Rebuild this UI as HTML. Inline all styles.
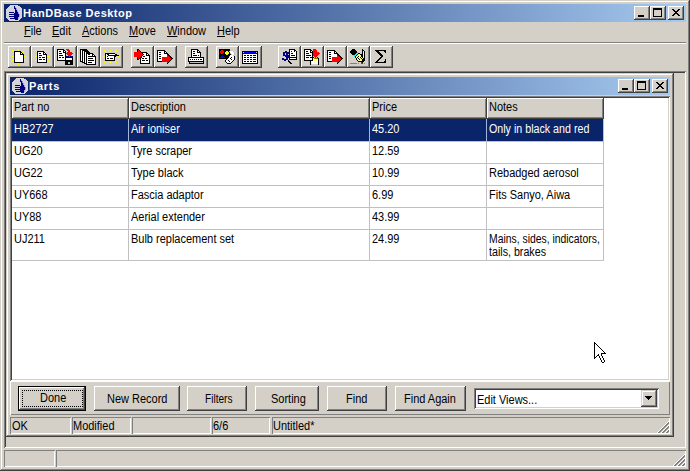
<!DOCTYPE html>
<html><head><meta charset="utf-8">
<style>
*{box-sizing:border-box}
html,body{margin:0;padding:0}
body{width:690px;height:471px;overflow:hidden;background:#D4D0C8;position:relative;font:11px "Liberation Sans",sans-serif;color:#000}
.a{position:absolute}
svg{display:block}
.t{position:absolute;white-space:nowrap;line-height:13px;font-size:12px;margin:0 0 0 -1px;transform:scaleX(0.915);transform-origin:0 0}
.raised{box-shadow:inset -1px -1px #404040,inset 1px 1px #D4D0C8,inset -2px -2px #808080,inset 2px 2px #fff}
.sunk{box-shadow:inset 1px 1px #808080,inset -1px -1px #fff,inset 2px 2px #404040,inset -2px -2px #D4D0C8}
.thin{box-shadow:inset 1px 1px #808080,inset -1px -1px #fff}
.btn{position:absolute;background:#D4D0C8;box-shadow:inset -1px -1px #404040,inset 1px 1px #fff,inset -2px -2px #808080}
.tb{position:absolute;top:46px;width:23px;height:22px;background:#D4D0C8;box-shadow:inset -1px -1px #404040,inset 1px 1px #fff,inset -2px -2px #808080}
.tb svg{position:absolute;left:3px;top:3px}
.cap{position:absolute;width:16px;height:14px;background:#D4D0C8;box-shadow:inset -1px -1px #404040,inset 1px 1px #fff,inset -2px -2px #808080}
.cap svg{position:absolute;left:0;top:0}
.bt{font-size:11px;font-weight:bold;color:#fff;transform:none;margin:-1px 0 0 -1px;letter-spacing:0.5px}
.u{text-decoration:underline;text-underline-offset:1px}
.hd{position:absolute;top:98px;height:21px;background:#D4D0C8;box-shadow:inset -1px -1px #404040,inset 1px 1px #fff,inset -2px -2px #808080}
.gv{position:absolute;width:1px;background:#C0C0C0}
.gh{position:absolute;height:1px;left:12px;width:592px;background:#C0C0C0}
.sel{color:#fff}
</style></head><body>
<!-- main frame -->
<div class="a raised" style="left:0;top:0;width:690px;height:471px"></div>
<!-- title bar -->
<div class="a" style="left:4px;top:4px;width:682px;height:18px;background:linear-gradient(to right,#0A246A,#A6CAF0)"></div>
<div class="a" style="left:6px;top:5px"><svg width="16" height="16" viewBox="0 0 16 16" shape-rendering="crispEdges"><rect x="4" y="0" width="8" height="1" fill="#D4D4DC"/><rect x="3" y="1" width="5" height="1" fill="#D4D4DC"/><rect x="8" y="1" width="1" height="1" fill="#000080"/><rect x="9" y="1" width="5" height="1" fill="#D4D4DC"/><rect x="2" y="2" width="6" height="1" fill="#D4D4DC"/><rect x="8" y="2" width="1" height="1" fill="#000080"/><rect x="9" y="2" width="1" height="1" fill="#A0A0E0"/><rect x="10" y="2" width="5" height="1" fill="#D4D4DC"/><rect x="1" y="3" width="7" height="1" fill="#D4D4DC"/><rect x="8" y="3" width="2" height="1" fill="#000080"/><rect x="10" y="3" width="1" height="1" fill="#A0A0E0"/><rect x="11" y="3" width="5" height="1" fill="#D4D4DC"/><rect x="0" y="4" width="9" height="1" fill="#D4D4DC"/><rect x="9" y="4" width="1" height="1" fill="#000080"/><rect x="10" y="4" width="1" height="1" fill="#A0A0E0"/><rect x="11" y="4" width="5" height="1" fill="#D4D4DC"/><rect x="0" y="5" width="9" height="1" fill="#D4D4DC"/><rect x="9" y="5" width="2" height="1" fill="#000080"/><rect x="11" y="5" width="1" height="1" fill="#A0A0E0"/><rect x="12" y="5" width="4" height="1" fill="#D4D4DC"/><rect x="0" y="6" width="9" height="1" fill="#D4D4DC"/><rect x="9" y="6" width="2" height="1" fill="#000080"/><rect x="11" y="6" width="1" height="1" fill="#A0A0E0"/><rect x="12" y="6" width="4" height="1" fill="#D4D4DC"/><rect x="0" y="7" width="3" height="1" fill="#D4D4DC"/><rect x="3" y="7" width="5" height="1" fill="#000080"/><rect x="8" y="7" width="1" height="1" fill="#D4D4DC"/><rect x="9" y="7" width="3" height="1" fill="#000080"/><rect x="12" y="7" width="1" height="1" fill="#A0A0E0"/><rect x="13" y="7" width="3" height="1" fill="#D4D4DC"/><rect x="0" y="8" width="8" height="1" fill="#D4D4DC"/><rect x="8" y="8" width="4" height="1" fill="#000080"/><rect x="12" y="8" width="1" height="1" fill="#A0A0E0"/><rect x="13" y="8" width="3" height="1" fill="#D4D4DC"/><rect x="0" y="9" width="3" height="1" fill="#D4D4DC"/><rect x="3" y="9" width="10" height="1" fill="#000080"/><rect x="13" y="9" width="1" height="1" fill="#A0A0E0"/><rect x="14" y="9" width="2" height="1" fill="#D4D4DC"/><rect x="0" y="10" width="8" height="1" fill="#D4D4DC"/><rect x="8" y="10" width="5" height="1" fill="#000080"/><rect x="13" y="10" width="1" height="1" fill="#A0A0E0"/><rect x="14" y="10" width="2" height="1" fill="#D4D4DC"/><rect x="0" y="11" width="3" height="1" fill="#D4D4DC"/><rect x="3" y="11" width="10" height="1" fill="#000080"/><rect x="13" y="11" width="1" height="1" fill="#A0A0E0"/><rect x="14" y="11" width="2" height="1" fill="#D4D4DC"/><rect x="0" y="12" width="8" height="1" fill="#D4D4DC"/><rect x="8" y="12" width="4" height="1" fill="#000080"/><rect x="12" y="12" width="1" height="1" fill="#A0A0E0"/><rect x="13" y="12" width="3" height="1" fill="#D4D4DC"/><rect x="1" y="13" width="3" height="1" fill="#D4D4DC"/><rect x="4" y="13" width="8" height="1" fill="#000080"/><rect x="12" y="13" width="1" height="1" fill="#A0A0E0"/><rect x="13" y="13" width="2" height="1" fill="#D4D4DC"/><rect x="2" y="14" width="7" height="1" fill="#D4D4DC"/><rect x="9" y="14" width="3" height="1" fill="#000080"/><rect x="12" y="14" width="2" height="1" fill="#D4D4DC"/><rect x="3" y="15" width="10" height="1" fill="#D4D4DC"/></svg></div>
<div class="t bt" style="left:24px;top:8px">HanDBase Desktop</div>
<div class="cap" style="left:634px;top:6px"><svg width="16" height="14" shape-rendering="crispEdges"><rect x="4" y="9" width="6" height="2"/></svg></div>
<div class="cap" style="left:650px;top:6px"><svg width="16" height="14" shape-rendering="crispEdges"><rect x="3" y="2" width="9" height="2"/><rect x="3" y="4" width="1" height="7"/><rect x="11" y="4" width="1" height="7"/><rect x="3" y="10" width="9" height="1"/></svg></div>
<div class="cap" style="left:668px;top:6px"><svg width="16" height="14" shape-rendering="crispEdges"><path d="M4 3h2v1h1v1h2v-1h1v-1h2v1h-1v1h-1v1h-1v1h1v1h1v1h1v1h-2v-1h-1v-1h-2v1h-1v1h-2v-1h1v-1h1v-1h1v-1h-1v-1h-1v-1h-1z"/></svg></div>

<!-- menu -->
<div class="t" style="left:25px;top:25px"><span class="u">F</span>ile</div>
<div class="t" style="left:53px;top:25px"><span class="u">E</span>dit</div>
<div class="t" style="left:83px;top:25px"><span class="u">A</span>ctions</div>
<div class="t" style="left:130px;top:25px"><span class="u">M</span>ove</div>
<div class="t" style="left:168px;top:25px"><span class="u">W</span>indow</div>
<div class="t" style="left:218px;top:25px"><span class="u">H</span>elp</div>
<!-- separator -->
<div class="a" style="left:4px;top:42px;width:682px;height:1px;background:#808080"></div>
<div class="a" style="left:4px;top:43px;width:682px;height:1px;background:#fff"></div>

<!-- toolbar -->
<div class="tb" style="left:8px"><svg width="16" height="16" viewBox="0 0 16 16" shape-rendering="crispEdges"><rect x="7" y="0" width="1" height="1" fill="#ffff00"/><rect x="1" y="1" width="1" height="1" fill="#ffff00"/><rect x="7" y="1" width="1" height="1" fill="#ffff00"/><rect x="2" y="2" width="1" height="1" fill="#ffff00"/><rect x="3" y="2" width="7" height="1" fill="#000000"/><rect x="12" y="2" width="1" height="1" fill="#ffff00"/><rect x="3" y="3" width="1" height="1" fill="#000000"/><rect x="4" y="3" width="5" height="1" fill="#ffffff"/><rect x="9" y="3" width="2" height="1" fill="#000000"/><rect x="11" y="3" width="1" height="1" fill="#ffff00"/><rect x="3" y="4" width="1" height="1" fill="#000000"/><rect x="4" y="4" width="5" height="1" fill="#ffffff"/><rect x="9" y="4" width="1" height="1" fill="#000000"/><rect x="10" y="4" width="1" height="1" fill="#ffffff"/><rect x="11" y="4" width="1" height="1" fill="#000000"/><rect x="3" y="5" width="1" height="1" fill="#000000"/><rect x="4" y="5" width="5" height="1" fill="#ffffff"/><rect x="9" y="5" width="4" height="1" fill="#000000"/><rect x="3" y="6" width="1" height="1" fill="#000000"/><rect x="4" y="6" width="8" height="1" fill="#ffffff"/><rect x="12" y="6" width="1" height="1" fill="#000000"/><rect x="1" y="7" width="2" height="1" fill="#ffff00"/><rect x="3" y="7" width="1" height="1" fill="#000000"/><rect x="4" y="7" width="8" height="1" fill="#ffffff"/><rect x="12" y="7" width="1" height="1" fill="#000000"/><rect x="13" y="7" width="2" height="1" fill="#ffff00"/><rect x="3" y="8" width="1" height="1" fill="#000000"/><rect x="4" y="8" width="8" height="1" fill="#ffffff"/><rect x="12" y="8" width="1" height="1" fill="#000000"/><rect x="15" y="8" width="1" height="1" fill="#ffff00"/><rect x="3" y="9" width="1" height="1" fill="#000000"/><rect x="4" y="9" width="8" height="1" fill="#ffffff"/><rect x="12" y="9" width="1" height="1" fill="#000000"/><rect x="2" y="10" width="1" height="1" fill="#ffff00"/><rect x="3" y="10" width="1" height="1" fill="#000000"/><rect x="4" y="10" width="8" height="1" fill="#ffffff"/><rect x="12" y="10" width="1" height="1" fill="#000000"/><rect x="13" y="10" width="1" height="1" fill="#ffff00"/><rect x="1" y="11" width="1" height="1" fill="#ffff00"/><rect x="3" y="11" width="1" height="1" fill="#000000"/><rect x="4" y="11" width="8" height="1" fill="#ffffff"/><rect x="12" y="11" width="1" height="1" fill="#000000"/><rect x="14" y="11" width="1" height="1" fill="#ffff00"/><rect x="3" y="12" width="1" height="1" fill="#000000"/><rect x="4" y="12" width="8" height="1" fill="#ffffff"/><rect x="12" y="12" width="1" height="1" fill="#000000"/><rect x="3" y="13" width="10" height="1" fill="#000000"/><rect x="7" y="14" width="1" height="1" fill="#ffff00"/><rect x="7" y="15" width="1" height="1" fill="#ffff00"/></svg></div>
<div class="tb" style="left:31px"><svg width="16" height="16" viewBox="0 0 16 16" shape-rendering="crispEdges"><rect x="7" y="0" width="1" height="1" fill="#ffff00"/><rect x="1" y="1" width="1" height="1" fill="#ffff00"/><rect x="7" y="1" width="1" height="1" fill="#ffff00"/><rect x="2" y="2" width="1" height="1" fill="#ffff00"/><rect x="3" y="2" width="7" height="1" fill="#000000"/><rect x="12" y="2" width="1" height="1" fill="#ffff00"/><rect x="3" y="3" width="1" height="1" fill="#000000"/><rect x="4" y="3" width="5" height="1" fill="#ffffff"/><rect x="9" y="3" width="2" height="1" fill="#000000"/><rect x="11" y="3" width="1" height="1" fill="#ffff00"/><rect x="3" y="4" width="1" height="1" fill="#000000"/><rect x="4" y="4" width="1" height="1" fill="#ffffff"/><rect x="5" y="4" width="2" height="1" fill="#000000"/><rect x="7" y="4" width="2" height="1" fill="#ffffff"/><rect x="9" y="4" width="1" height="1" fill="#000000"/><rect x="10" y="4" width="1" height="1" fill="#ffffff"/><rect x="11" y="4" width="1" height="1" fill="#000000"/><rect x="3" y="5" width="1" height="1" fill="#000000"/><rect x="4" y="5" width="5" height="1" fill="#ffffff"/><rect x="9" y="5" width="4" height="1" fill="#000000"/><rect x="3" y="6" width="1" height="1" fill="#000000"/><rect x="4" y="6" width="1" height="1" fill="#ffffff"/><rect x="5" y="6" width="3" height="1" fill="#000000"/><rect x="8" y="6" width="4" height="1" fill="#ffffff"/><rect x="12" y="6" width="1" height="1" fill="#000000"/><rect x="1" y="7" width="2" height="1" fill="#ffff00"/><rect x="3" y="7" width="1" height="1" fill="#000000"/><rect x="4" y="7" width="8" height="1" fill="#ffffff"/><rect x="12" y="7" width="1" height="1" fill="#000000"/><rect x="13" y="7" width="2" height="1" fill="#ffff00"/><rect x="3" y="8" width="1" height="1" fill="#000000"/><rect x="4" y="8" width="1" height="1" fill="#ffffff"/><rect x="5" y="8" width="2" height="1" fill="#000000"/><rect x="7" y="8" width="1" height="1" fill="#ffffff"/><rect x="8" y="8" width="3" height="1" fill="#000000"/><rect x="11" y="8" width="1" height="1" fill="#ffffff"/><rect x="12" y="8" width="1" height="1" fill="#000000"/><rect x="15" y="8" width="1" height="1" fill="#ffff00"/><rect x="3" y="9" width="1" height="1" fill="#000000"/><rect x="4" y="9" width="8" height="1" fill="#ffffff"/><rect x="12" y="9" width="1" height="1" fill="#000000"/><rect x="2" y="10" width="1" height="1" fill="#ffff00"/><rect x="3" y="10" width="1" height="1" fill="#000000"/><rect x="4" y="10" width="1" height="1" fill="#ffffff"/><rect x="5" y="10" width="3" height="1" fill="#000000"/><rect x="8" y="10" width="1" height="1" fill="#ffffff"/><rect x="9" y="10" width="2" height="1" fill="#000000"/><rect x="11" y="10" width="1" height="1" fill="#ffffff"/><rect x="12" y="10" width="1" height="1" fill="#000000"/><rect x="13" y="10" width="1" height="1" fill="#ffff00"/><rect x="1" y="11" width="1" height="1" fill="#ffff00"/><rect x="3" y="11" width="1" height="1" fill="#000000"/><rect x="4" y="11" width="8" height="1" fill="#ffffff"/><rect x="12" y="11" width="1" height="1" fill="#000000"/><rect x="14" y="11" width="1" height="1" fill="#ffff00"/><rect x="3" y="12" width="1" height="1" fill="#000000"/><rect x="4" y="12" width="8" height="1" fill="#ffffff"/><rect x="12" y="12" width="1" height="1" fill="#000000"/><rect x="3" y="13" width="10" height="1" fill="#000000"/><rect x="7" y="14" width="1" height="1" fill="#ffff00"/><rect x="7" y="15" width="1" height="1" fill="#ffff00"/></svg></div>
<div class="tb" style="left:54px"><svg width="16" height="16" viewBox="0 0 16 16" shape-rendering="crispEdges"><rect x="0" y="0" width="7" height="1" fill="#000000"/><rect x="9" y="0" width="3" height="1" fill="#ff0000"/><rect x="0" y="1" width="1" height="1" fill="#000000"/><rect x="1" y="1" width="5" height="1" fill="#ffffff"/><rect x="6" y="1" width="2" height="1" fill="#000000"/><rect x="10" y="1" width="3" height="1" fill="#ff0000"/><rect x="0" y="2" width="1" height="1" fill="#000000"/><rect x="1" y="2" width="1" height="1" fill="#ffffff"/><rect x="2" y="2" width="2" height="1" fill="#000000"/><rect x="4" y="2" width="2" height="1" fill="#ffffff"/><rect x="6" y="2" width="1" height="1" fill="#000000"/><rect x="7" y="2" width="1" height="1" fill="#ffffff"/><rect x="8" y="2" width="1" height="1" fill="#000000"/><rect x="11" y="2" width="2" height="1" fill="#ff0000"/><rect x="0" y="3" width="1" height="1" fill="#000000"/><rect x="1" y="3" width="5" height="1" fill="#ffffff"/><rect x="6" y="3" width="3" height="1" fill="#000000"/><rect x="10" y="3" width="5" height="1" fill="#ff0000"/><rect x="0" y="4" width="1" height="1" fill="#000000"/><rect x="1" y="4" width="1" height="1" fill="#ffffff"/><rect x="2" y="4" width="3" height="1" fill="#000000"/><rect x="5" y="4" width="3" height="1" fill="#ffffff"/><rect x="8" y="4" width="1" height="1" fill="#000000"/><rect x="9" y="4" width="7" height="1" fill="#ff0000"/><rect x="0" y="5" width="1" height="1" fill="#000000"/><rect x="1" y="5" width="7" height="1" fill="#ffffff"/><rect x="8" y="5" width="1" height="1" fill="#000000"/><rect x="10" y="5" width="5" height="1" fill="#ff0000"/><rect x="0" y="6" width="1" height="1" fill="#000000"/><rect x="1" y="6" width="1" height="1" fill="#ffffff"/><rect x="2" y="6" width="4" height="1" fill="#000000"/><rect x="6" y="6" width="2" height="1" fill="#ffffff"/><rect x="8" y="6" width="1" height="1" fill="#000000"/><rect x="11" y="6" width="3" height="1" fill="#ff0000"/><rect x="0" y="7" width="1" height="1" fill="#000000"/><rect x="1" y="7" width="7" height="1" fill="#ffffff"/><rect x="8" y="7" width="1" height="1" fill="#000000"/><rect x="9" y="7" width="3" height="1" fill="#000080"/><rect x="12" y="7" width="1" height="1" fill="#ff0000"/><rect x="13" y="7" width="3" height="1" fill="#000080"/><rect x="0" y="8" width="1" height="1" fill="#000000"/><rect x="1" y="8" width="1" height="1" fill="#ffffff"/><rect x="2" y="8" width="2" height="1" fill="#000000"/><rect x="4" y="8" width="1" height="1" fill="#ffffff"/><rect x="5" y="8" width="2" height="1" fill="#000000"/><rect x="7" y="8" width="1" height="1" fill="#ffffff"/><rect x="8" y="8" width="8" height="1" fill="#000000"/><rect x="0" y="9" width="1" height="1" fill="#000000"/><rect x="1" y="9" width="7" height="1" fill="#ffffff"/><rect x="8" y="9" width="1" height="1" fill="#000000"/><rect x="9" y="9" width="6" height="1" fill="#ffffff"/><rect x="15" y="9" width="1" height="1" fill="#000000"/><rect x="0" y="10" width="1" height="1" fill="#000000"/><rect x="1" y="10" width="7" height="1" fill="#ffffff"/><rect x="8" y="10" width="1" height="1" fill="#000000"/><rect x="9" y="10" width="6" height="1" fill="#ffffff"/><rect x="15" y="10" width="1" height="1" fill="#000000"/><rect x="0" y="11" width="16" height="1" fill="#000000"/><rect x="8" y="12" width="8" height="1" fill="#000000"/><rect x="8" y="13" width="3" height="1" fill="#000000"/><rect x="11" y="13" width="2" height="1" fill="#c0c0c0"/><rect x="13" y="13" width="3" height="1" fill="#000000"/><rect x="8" y="14" width="3" height="1" fill="#000000"/><rect x="11" y="14" width="2" height="1" fill="#c0c0c0"/><rect x="13" y="14" width="3" height="1" fill="#000000"/><rect x="8" y="15" width="8" height="1" fill="#000000"/></svg></div>
<div class="tb" style="left:77px"><svg width="16" height="16" viewBox="0 0 16 16" shape-rendering="crispEdges"><rect x="0" y="0" width="7" height="1" fill="#000000"/><rect x="0" y="1" width="1" height="1" fill="#000000"/><rect x="1" y="1" width="1" height="1" fill="#ffffff"/><rect x="2" y="1" width="6" height="1" fill="#000000"/><rect x="0" y="2" width="1" height="1" fill="#000000"/><rect x="1" y="2" width="1" height="1" fill="#ffffff"/><rect x="2" y="2" width="1" height="1" fill="#000000"/><rect x="3" y="2" width="1" height="1" fill="#ffffff"/><rect x="4" y="2" width="5" height="1" fill="#000000"/><rect x="0" y="3" width="1" height="1" fill="#000000"/><rect x="1" y="3" width="1" height="1" fill="#ffffff"/><rect x="2" y="3" width="1" height="1" fill="#000000"/><rect x="3" y="3" width="1" height="1" fill="#ffffff"/><rect x="4" y="3" width="1" height="1" fill="#000000"/><rect x="5" y="3" width="1" height="1" fill="#ffffff"/><rect x="6" y="3" width="4" height="1" fill="#000000"/><rect x="0" y="4" width="1" height="1" fill="#000000"/><rect x="1" y="4" width="1" height="1" fill="#ffffff"/><rect x="2" y="4" width="1" height="1" fill="#000000"/><rect x="3" y="4" width="1" height="1" fill="#ffffff"/><rect x="4" y="4" width="1" height="1" fill="#000000"/><rect x="5" y="4" width="1" height="1" fill="#ffffff"/><rect x="6" y="4" width="7" height="1" fill="#000000"/><rect x="0" y="5" width="1" height="1" fill="#000000"/><rect x="1" y="5" width="1" height="1" fill="#ffffff"/><rect x="2" y="5" width="1" height="1" fill="#000000"/><rect x="3" y="5" width="1" height="1" fill="#ffffff"/><rect x="4" y="5" width="1" height="1" fill="#000000"/><rect x="5" y="5" width="1" height="1" fill="#ffffff"/><rect x="6" y="5" width="1" height="1" fill="#000000"/><rect x="7" y="5" width="1" height="1" fill="#ffffff"/><rect x="8" y="5" width="2" height="1" fill="#000000"/><rect x="10" y="5" width="2" height="1" fill="#ffffff"/><rect x="12" y="5" width="2" height="1" fill="#000000"/><rect x="0" y="6" width="1" height="1" fill="#000000"/><rect x="1" y="6" width="1" height="1" fill="#ffffff"/><rect x="2" y="6" width="1" height="1" fill="#000000"/><rect x="3" y="6" width="1" height="1" fill="#ffffff"/><rect x="4" y="6" width="1" height="1" fill="#000000"/><rect x="5" y="6" width="1" height="1" fill="#ffffff"/><rect x="6" y="6" width="1" height="1" fill="#000000"/><rect x="7" y="6" width="5" height="1" fill="#ffffff"/><rect x="12" y="6" width="1" height="1" fill="#000000"/><rect x="13" y="6" width="1" height="1" fill="#ffffff"/><rect x="14" y="6" width="1" height="1" fill="#000000"/><rect x="0" y="7" width="1" height="1" fill="#000000"/><rect x="1" y="7" width="1" height="1" fill="#ffffff"/><rect x="2" y="7" width="1" height="1" fill="#000000"/><rect x="3" y="7" width="1" height="1" fill="#ffffff"/><rect x="4" y="7" width="1" height="1" fill="#000000"/><rect x="5" y="7" width="1" height="1" fill="#ffffff"/><rect x="6" y="7" width="1" height="1" fill="#000000"/><rect x="7" y="7" width="1" height="1" fill="#ffffff"/><rect x="8" y="7" width="8" height="1" fill="#000000"/><rect x="0" y="8" width="1" height="1" fill="#000000"/><rect x="1" y="8" width="1" height="1" fill="#ffffff"/><rect x="2" y="8" width="1" height="1" fill="#000000"/><rect x="3" y="8" width="1" height="1" fill="#ffffff"/><rect x="4" y="8" width="1" height="1" fill="#000000"/><rect x="5" y="8" width="1" height="1" fill="#ffffff"/><rect x="6" y="8" width="1" height="1" fill="#000000"/><rect x="7" y="8" width="8" height="1" fill="#ffffff"/><rect x="15" y="8" width="1" height="1" fill="#000000"/><rect x="0" y="9" width="1" height="1" fill="#000000"/><rect x="1" y="9" width="1" height="1" fill="#ffffff"/><rect x="2" y="9" width="1" height="1" fill="#000000"/><rect x="3" y="9" width="1" height="1" fill="#ffffff"/><rect x="4" y="9" width="1" height="1" fill="#000000"/><rect x="5" y="9" width="1" height="1" fill="#ffffff"/><rect x="6" y="9" width="1" height="1" fill="#000000"/><rect x="7" y="9" width="1" height="1" fill="#ffffff"/><rect x="8" y="9" width="5" height="1" fill="#000000"/><rect x="13" y="9" width="2" height="1" fill="#ffffff"/><rect x="15" y="9" width="1" height="1" fill="#000000"/><rect x="0" y="10" width="1" height="1" fill="#000000"/><rect x="1" y="10" width="1" height="1" fill="#ffffff"/><rect x="2" y="10" width="1" height="1" fill="#000000"/><rect x="3" y="10" width="1" height="1" fill="#ffffff"/><rect x="4" y="10" width="1" height="1" fill="#000000"/><rect x="5" y="10" width="1" height="1" fill="#ffffff"/><rect x="6" y="10" width="1" height="1" fill="#000000"/><rect x="7" y="10" width="8" height="1" fill="#ffffff"/><rect x="15" y="10" width="1" height="1" fill="#000000"/><rect x="0" y="11" width="1" height="1" fill="#000000"/><rect x="1" y="11" width="1" height="1" fill="#ffffff"/><rect x="2" y="11" width="1" height="1" fill="#000000"/><rect x="3" y="11" width="1" height="1" fill="#ffffff"/><rect x="4" y="11" width="1" height="1" fill="#000000"/><rect x="5" y="11" width="1" height="1" fill="#ffffff"/><rect x="6" y="11" width="1" height="1" fill="#000000"/><rect x="7" y="11" width="1" height="1" fill="#ffffff"/><rect x="8" y="11" width="6" height="1" fill="#000000"/><rect x="14" y="11" width="1" height="1" fill="#ffffff"/><rect x="15" y="11" width="1" height="1" fill="#000000"/><rect x="0" y="12" width="3" height="1" fill="#000000"/><rect x="3" y="12" width="1" height="1" fill="#ffffff"/><rect x="4" y="12" width="1" height="1" fill="#000000"/><rect x="5" y="12" width="1" height="1" fill="#ffffff"/><rect x="6" y="12" width="1" height="1" fill="#000000"/><rect x="7" y="12" width="8" height="1" fill="#ffffff"/><rect x="15" y="12" width="1" height="1" fill="#000000"/><rect x="2" y="13" width="3" height="1" fill="#000000"/><rect x="5" y="13" width="1" height="1" fill="#ffffff"/><rect x="6" y="13" width="1" height="1" fill="#000000"/><rect x="7" y="13" width="1" height="1" fill="#ffffff"/><rect x="8" y="13" width="4" height="1" fill="#000000"/><rect x="12" y="13" width="3" height="1" fill="#ffffff"/><rect x="15" y="13" width="1" height="1" fill="#000000"/><rect x="4" y="14" width="3" height="1" fill="#000000"/><rect x="7" y="14" width="8" height="1" fill="#ffffff"/><rect x="15" y="14" width="1" height="1" fill="#000000"/><rect x="6" y="15" width="10" height="1" fill="#000000"/></svg></div>
<div class="tb" style="left:100px"><svg width="16" height="16" viewBox="0 0 16 16" shape-rendering="crispEdges"><rect x="1" y="1" width="1" height="1" fill="#ffff00"/><rect x="7" y="1" width="1" height="1" fill="#ffff00"/><rect x="13" y="1" width="1" height="1" fill="#ffff00"/><rect x="2" y="2" width="1" height="1" fill="#ffff00"/><rect x="7" y="2" width="1" height="1" fill="#ffff00"/><rect x="12" y="2" width="1" height="1" fill="#ffff00"/><rect x="2" y="4" width="10" height="1" fill="#000000"/><rect x="2" y="5" width="1" height="1" fill="#000000"/><rect x="3" y="5" width="1" height="1" fill="#ffffff"/><rect x="4" y="5" width="2" height="1" fill="#000000"/><rect x="6" y="5" width="6" height="1" fill="#ffffff"/><rect x="12" y="5" width="2" height="1" fill="#000000"/><rect x="2" y="6" width="1" height="1" fill="#000000"/><rect x="3" y="6" width="2" height="1" fill="#ffffff"/><rect x="5" y="6" width="11" height="1" fill="#000000"/><rect x="0" y="7" width="2" height="1" fill="#ffff00"/><rect x="2" y="7" width="1" height="1" fill="#000000"/><rect x="3" y="7" width="1" height="1" fill="#ffffff"/><rect x="4" y="7" width="1" height="1" fill="#000000"/><rect x="5" y="7" width="6" height="1" fill="#ffffff"/><rect x="11" y="7" width="2" height="1" fill="#000000"/><rect x="14" y="7" width="2" height="1" fill="#ffff00"/><rect x="2" y="8" width="1" height="1" fill="#000000"/><rect x="3" y="8" width="8" height="1" fill="#ffffff"/><rect x="11" y="8" width="1" height="1" fill="#000000"/><rect x="2" y="9" width="1" height="1" fill="#000000"/><rect x="3" y="9" width="1" height="1" fill="#ffffff"/><rect x="4" y="9" width="2" height="1" fill="#000000"/><rect x="6" y="9" width="1" height="1" fill="#ffffff"/><rect x="7" y="9" width="3" height="1" fill="#000000"/><rect x="10" y="9" width="1" height="1" fill="#ffffff"/><rect x="11" y="9" width="1" height="1" fill="#000000"/><rect x="2" y="10" width="1" height="1" fill="#000000"/><rect x="3" y="10" width="8" height="1" fill="#ffffff"/><rect x="11" y="10" width="1" height="1" fill="#000000"/><rect x="2" y="11" width="10" height="1" fill="#000000"/><rect x="2" y="12" width="1" height="1" fill="#ffff00"/><rect x="7" y="12" width="1" height="1" fill="#ffff00"/><rect x="12" y="12" width="1" height="1" fill="#ffff00"/><rect x="1" y="13" width="1" height="1" fill="#ffff00"/><rect x="7" y="13" width="1" height="1" fill="#ffff00"/><rect x="13" y="13" width="1" height="1" fill="#ffff00"/></svg></div>
<div class="tb" style="left:131px"><svg width="16" height="16" viewBox="0 0 16 16" shape-rendering="crispEdges"><rect x="3" y="0" width="2" height="1" fill="#000000"/><rect x="3" y="1" width="1" height="1" fill="#000000"/><rect x="4" y="1" width="1" height="1" fill="#ff0000"/><rect x="5" y="1" width="1" height="1" fill="#000000"/><rect x="3" y="2" width="1" height="1" fill="#000000"/><rect x="4" y="2" width="2" height="1" fill="#ff0000"/><rect x="6" y="2" width="1" height="1" fill="#000000"/><rect x="0" y="3" width="7" height="1" fill="#ff0000"/><rect x="7" y="3" width="6" height="1" fill="#000000"/><rect x="0" y="4" width="8" height="1" fill="#ff0000"/><rect x="8" y="4" width="1" height="1" fill="#000000"/><rect x="9" y="4" width="3" height="1" fill="#ffffff"/><rect x="12" y="4" width="2" height="1" fill="#000000"/><rect x="0" y="5" width="9" height="1" fill="#ff0000"/><rect x="9" y="5" width="1" height="1" fill="#000000"/><rect x="10" y="5" width="2" height="1" fill="#ffffff"/><rect x="12" y="5" width="1" height="1" fill="#000000"/><rect x="13" y="5" width="1" height="1" fill="#ffffff"/><rect x="14" y="5" width="1" height="1" fill="#000000"/><rect x="0" y="6" width="8" height="1" fill="#ff0000"/><rect x="8" y="6" width="1" height="1" fill="#000000"/><rect x="9" y="6" width="3" height="1" fill="#ffffff"/><rect x="12" y="6" width="4" height="1" fill="#000000"/><rect x="0" y="7" width="7" height="1" fill="#ff0000"/><rect x="7" y="7" width="1" height="1" fill="#000000"/><rect x="8" y="7" width="1" height="1" fill="#ffffff"/><rect x="9" y="7" width="2" height="1" fill="#000000"/><rect x="11" y="7" width="4" height="1" fill="#ffffff"/><rect x="15" y="7" width="1" height="1" fill="#000000"/><rect x="3" y="8" width="1" height="1" fill="#000000"/><rect x="4" y="8" width="2" height="1" fill="#ff0000"/><rect x="6" y="8" width="2" height="1" fill="#000000"/><rect x="8" y="8" width="7" height="1" fill="#ffffff"/><rect x="15" y="8" width="1" height="1" fill="#000000"/><rect x="3" y="9" width="1" height="1" fill="#000000"/><rect x="4" y="9" width="1" height="1" fill="#ff0000"/><rect x="5" y="9" width="2" height="1" fill="#000000"/><rect x="7" y="9" width="1" height="1" fill="#ffffff"/><rect x="8" y="9" width="2" height="1" fill="#000000"/><rect x="10" y="9" width="1" height="1" fill="#ffffff"/><rect x="11" y="9" width="2" height="1" fill="#000000"/><rect x="13" y="9" width="2" height="1" fill="#ffffff"/><rect x="15" y="9" width="1" height="1" fill="#000000"/><rect x="3" y="10" width="2" height="1" fill="#000000"/><rect x="6" y="10" width="1" height="1" fill="#000000"/><rect x="7" y="10" width="8" height="1" fill="#ffffff"/><rect x="15" y="10" width="1" height="1" fill="#000000"/><rect x="6" y="11" width="1" height="1" fill="#000000"/><rect x="7" y="11" width="1" height="1" fill="#ffffff"/><rect x="8" y="11" width="3" height="1" fill="#000000"/><rect x="11" y="11" width="1" height="1" fill="#ffffff"/><rect x="12" y="11" width="2" height="1" fill="#000000"/><rect x="14" y="11" width="1" height="1" fill="#ffffff"/><rect x="15" y="11" width="1" height="1" fill="#000000"/><rect x="6" y="12" width="1" height="1" fill="#000000"/><rect x="7" y="12" width="8" height="1" fill="#ffffff"/><rect x="15" y="12" width="1" height="1" fill="#000000"/><rect x="6" y="13" width="1" height="1" fill="#000000"/><rect x="7" y="13" width="8" height="1" fill="#ffffff"/><rect x="15" y="13" width="1" height="1" fill="#000000"/><rect x="6" y="14" width="10" height="1" fill="#000000"/></svg></div>
<div class="tb" style="left:154px"><svg width="16" height="16" viewBox="0 0 16 16" shape-rendering="crispEdges"><rect x="0" y="1" width="8" height="1" fill="#000000"/><rect x="0" y="2" width="1" height="1" fill="#000000"/><rect x="1" y="2" width="6" height="1" fill="#ffffff"/><rect x="7" y="2" width="2" height="1" fill="#000000"/><rect x="0" y="3" width="1" height="1" fill="#000000"/><rect x="1" y="3" width="1" height="1" fill="#ffffff"/><rect x="2" y="3" width="2" height="1" fill="#000000"/><rect x="4" y="3" width="3" height="1" fill="#ffffff"/><rect x="7" y="3" width="1" height="1" fill="#000000"/><rect x="8" y="3" width="1" height="1" fill="#ffffff"/><rect x="9" y="3" width="1" height="1" fill="#000000"/><rect x="0" y="4" width="1" height="1" fill="#000000"/><rect x="1" y="4" width="6" height="1" fill="#ffffff"/><rect x="7" y="4" width="4" height="1" fill="#000000"/><rect x="0" y="5" width="1" height="1" fill="#000000"/><rect x="1" y="5" width="1" height="1" fill="#ffffff"/><rect x="2" y="5" width="2" height="1" fill="#000000"/><rect x="4" y="5" width="6" height="1" fill="#ffffff"/><rect x="10" y="5" width="2" height="1" fill="#000000"/><rect x="0" y="6" width="1" height="1" fill="#000000"/><rect x="1" y="6" width="9" height="1" fill="#ffffff"/><rect x="10" y="6" width="1" height="1" fill="#ff0000"/><rect x="11" y="6" width="2" height="1" fill="#000000"/><rect x="0" y="7" width="1" height="1" fill="#000000"/><rect x="1" y="7" width="1" height="1" fill="#ffffff"/><rect x="2" y="7" width="2" height="1" fill="#000000"/><rect x="4" y="7" width="6" height="1" fill="#ffffff"/><rect x="10" y="7" width="2" height="1" fill="#ff0000"/><rect x="12" y="7" width="2" height="1" fill="#000000"/><rect x="0" y="8" width="1" height="1" fill="#000000"/><rect x="1" y="8" width="4" height="1" fill="#ffffff"/><rect x="5" y="8" width="8" height="1" fill="#ff0000"/><rect x="13" y="8" width="2" height="1" fill="#000000"/><rect x="0" y="9" width="1" height="1" fill="#000000"/><rect x="1" y="9" width="1" height="1" fill="#ffffff"/><rect x="2" y="9" width="2" height="1" fill="#000000"/><rect x="4" y="9" width="1" height="1" fill="#ffffff"/><rect x="5" y="9" width="9" height="1" fill="#ff0000"/><rect x="14" y="9" width="2" height="1" fill="#000000"/><rect x="0" y="10" width="1" height="1" fill="#000000"/><rect x="1" y="10" width="4" height="1" fill="#ffffff"/><rect x="5" y="10" width="9" height="1" fill="#ff0000"/><rect x="14" y="10" width="1" height="1" fill="#000000"/><rect x="0" y="11" width="1" height="1" fill="#000000"/><rect x="1" y="11" width="4" height="1" fill="#ffffff"/><rect x="5" y="11" width="8" height="1" fill="#ff0000"/><rect x="13" y="11" width="1" height="1" fill="#000000"/><rect x="0" y="12" width="5" height="1" fill="#000000"/><rect x="5" y="12" width="7" height="1" fill="#ff0000"/><rect x="12" y="12" width="1" height="1" fill="#000000"/><rect x="10" y="13" width="1" height="1" fill="#ff0000"/><rect x="11" y="13" width="1" height="1" fill="#000000"/><rect x="10" y="14" width="1" height="1" fill="#000000"/></svg></div>
<div class="tb" style="left:185px"><svg width="16" height="16" viewBox="0 0 16 16" shape-rendering="crispEdges"><rect x="3" y="0" width="7" height="1" fill="#000000"/><rect x="3" y="1" width="1" height="1" fill="#000000"/><rect x="4" y="1" width="5" height="1" fill="#ffffff"/><rect x="9" y="1" width="2" height="1" fill="#000000"/><rect x="3" y="2" width="1" height="1" fill="#000000"/><rect x="4" y="2" width="1" height="1" fill="#ffffff"/><rect x="5" y="2" width="2" height="1" fill="#000000"/><rect x="7" y="2" width="2" height="1" fill="#ffffff"/><rect x="9" y="2" width="1" height="1" fill="#000000"/><rect x="10" y="2" width="1" height="1" fill="#ffffff"/><rect x="11" y="2" width="1" height="1" fill="#000000"/><rect x="3" y="3" width="1" height="1" fill="#000000"/><rect x="4" y="3" width="5" height="1" fill="#ffffff"/><rect x="9" y="3" width="4" height="1" fill="#000000"/><rect x="3" y="4" width="1" height="1" fill="#000000"/><rect x="4" y="4" width="1" height="1" fill="#ffffff"/><rect x="5" y="4" width="2" height="1" fill="#000000"/><rect x="7" y="4" width="5" height="1" fill="#ffffff"/><rect x="12" y="4" width="1" height="1" fill="#000000"/><rect x="3" y="5" width="1" height="1" fill="#000000"/><rect x="4" y="5" width="8" height="1" fill="#ffffff"/><rect x="12" y="5" width="1" height="1" fill="#000000"/><rect x="3" y="6" width="1" height="1" fill="#000000"/><rect x="4" y="6" width="1" height="1" fill="#ffffff"/><rect x="5" y="6" width="4" height="1" fill="#000000"/><rect x="9" y="6" width="1" height="1" fill="#ffffff"/><rect x="10" y="6" width="1" height="1" fill="#000000"/><rect x="11" y="6" width="1" height="1" fill="#ffffff"/><rect x="12" y="6" width="1" height="1" fill="#000000"/><rect x="3" y="7" width="1" height="1" fill="#000000"/><rect x="4" y="7" width="8" height="1" fill="#ffffff"/><rect x="12" y="7" width="1" height="1" fill="#000000"/><rect x="0" y="8" width="16" height="1" fill="#000000"/><rect x="0" y="9" width="1" height="1" fill="#000000"/><rect x="1" y="9" width="14" height="1" fill="#ffffff"/><rect x="15" y="9" width="1" height="1" fill="#000000"/><rect x="0" y="10" width="1" height="1" fill="#000000"/><rect x="1" y="10" width="1" height="1" fill="#ffffff"/><rect x="2" y="10" width="1" height="1" fill="#000000"/><rect x="3" y="10" width="1" height="1" fill="#ffffff"/><rect x="4" y="10" width="1" height="1" fill="#000000"/><rect x="5" y="10" width="1" height="1" fill="#ffffff"/><rect x="6" y="10" width="1" height="1" fill="#000000"/><rect x="7" y="10" width="1" height="1" fill="#ffffff"/><rect x="8" y="10" width="1" height="1" fill="#000000"/><rect x="9" y="10" width="1" height="1" fill="#ffffff"/><rect x="10" y="10" width="1" height="1" fill="#000000"/><rect x="11" y="10" width="1" height="1" fill="#ffffff"/><rect x="12" y="10" width="2" height="1" fill="#000000"/><rect x="14" y="10" width="1" height="1" fill="#ffffff"/><rect x="15" y="10" width="1" height="1" fill="#000000"/><rect x="0" y="11" width="1" height="1" fill="#000000"/><rect x="1" y="11" width="14" height="1" fill="#ffffff"/><rect x="15" y="11" width="1" height="1" fill="#000000"/><rect x="0" y="12" width="16" height="1" fill="#000000"/><rect x="1" y="13" width="1" height="1" fill="#000000"/><rect x="2" y="13" width="13" height="1" fill="#c0c0c0"/><rect x="15" y="13" width="1" height="1" fill="#000000"/><rect x="1" y="14" width="15" height="1" fill="#000000"/></svg></div>
<div class="tb" style="left:216px"><svg width="16" height="16" viewBox="0 0 16 16" shape-rendering="crispEdges"><rect x="0" y="0" width="11" height="1" fill="#000000"/><rect x="0" y="1" width="2" height="1" fill="#000000"/><rect x="2" y="1" width="2" height="1" fill="#ff0000"/><rect x="4" y="1" width="7" height="1" fill="#000000"/><rect x="11" y="1" width="3" height="1" fill="#c0c0c0"/><rect x="0" y="2" width="1" height="1" fill="#000000"/><rect x="1" y="2" width="4" height="1" fill="#ff0000"/><rect x="5" y="2" width="2" height="1" fill="#000000"/><rect x="7" y="2" width="2" height="1" fill="#ffff00"/><rect x="9" y="2" width="1" height="1" fill="#000000"/><rect x="10" y="2" width="1" height="1" fill="#c0c0c0"/><rect x="11" y="2" width="3" height="1" fill="#ffffff"/><rect x="14" y="2" width="1" height="1" fill="#c0c0c0"/><rect x="0" y="3" width="1" height="1" fill="#000000"/><rect x="1" y="3" width="4" height="1" fill="#ff0000"/><rect x="5" y="3" width="1" height="1" fill="#000000"/><rect x="6" y="3" width="4" height="1" fill="#ffff00"/><rect x="10" y="3" width="1" height="1" fill="#000000"/><rect x="11" y="3" width="4" height="1" fill="#ffffff"/><rect x="15" y="3" width="1" height="1" fill="#c0c0c0"/><rect x="0" y="4" width="2" height="1" fill="#000000"/><rect x="2" y="4" width="2" height="1" fill="#ff0000"/><rect x="4" y="4" width="2" height="1" fill="#000000"/><rect x="6" y="4" width="4" height="1" fill="#ffff00"/><rect x="10" y="4" width="1" height="1" fill="#000000"/><rect x="11" y="4" width="1" height="1" fill="#c0c0c0"/><rect x="12" y="4" width="3" height="1" fill="#ffffff"/><rect x="15" y="4" width="1" height="1" fill="#c0c0c0"/><rect x="0" y="5" width="7" height="1" fill="#000000"/><rect x="7" y="5" width="2" height="1" fill="#ffff00"/><rect x="9" y="5" width="3" height="1" fill="#000000"/><rect x="12" y="5" width="1" height="1" fill="#c0c0c0"/><rect x="13" y="5" width="2" height="1" fill="#ffffff"/><rect x="15" y="5" width="1" height="1" fill="#c0c0c0"/><rect x="0" y="6" width="3" height="1" fill="#000000"/><rect x="3" y="6" width="1" height="1" fill="#0000ff"/><rect x="4" y="6" width="7" height="1" fill="#000000"/><rect x="11" y="6" width="3" height="1" fill="#ffffff"/><rect x="14" y="6" width="1" height="1" fill="#c0c0c0"/><rect x="0" y="7" width="2" height="1" fill="#000000"/><rect x="2" y="7" width="3" height="1" fill="#0000ff"/><rect x="5" y="7" width="5" height="1" fill="#000000"/><rect x="10" y="7" width="1" height="1" fill="#c0c0c0"/><rect x="11" y="7" width="4" height="1" fill="#ffffff"/><rect x="15" y="7" width="1" height="1" fill="#000000"/><rect x="0" y="8" width="1" height="1" fill="#000000"/><rect x="1" y="8" width="5" height="1" fill="#0000ff"/><rect x="6" y="8" width="4" height="1" fill="#000000"/><rect x="10" y="8" width="2" height="1" fill="#ffffff"/><rect x="12" y="8" width="1" height="1" fill="#000000"/><rect x="13" y="8" width="2" height="1" fill="#ffffff"/><rect x="15" y="8" width="1" height="1" fill="#000000"/><rect x="0" y="9" width="9" height="1" fill="#000000"/><rect x="9" y="9" width="2" height="1" fill="#ffffff"/><rect x="11" y="9" width="1" height="1" fill="#000000"/><rect x="12" y="9" width="3" height="1" fill="#ffffff"/><rect x="15" y="9" width="1" height="1" fill="#000000"/><rect x="7" y="10" width="1" height="1" fill="#000000"/><rect x="8" y="10" width="4" height="1" fill="#ffffff"/><rect x="12" y="10" width="1" height="1" fill="#000000"/><rect x="13" y="10" width="2" height="1" fill="#ffffff"/><rect x="15" y="10" width="1" height="1" fill="#000000"/><rect x="6" y="11" width="1" height="1" fill="#000000"/><rect x="7" y="11" width="2" height="1" fill="#ffffff"/><rect x="9" y="11" width="1" height="1" fill="#000000"/><rect x="10" y="11" width="4" height="1" fill="#ffffff"/><rect x="14" y="11" width="1" height="1" fill="#000000"/><rect x="6" y="12" width="1" height="1" fill="#000000"/><rect x="7" y="12" width="3" height="1" fill="#ffffff"/><rect x="10" y="12" width="1" height="1" fill="#000000"/><rect x="11" y="12" width="2" height="1" fill="#ffffff"/><rect x="13" y="12" width="1" height="1" fill="#000000"/><rect x="7" y="13" width="1" height="1" fill="#000000"/><rect x="8" y="13" width="4" height="1" fill="#ffffff"/><rect x="12" y="13" width="1" height="1" fill="#000000"/><rect x="8" y="14" width="4" height="1" fill="#000000"/></svg></div>
<div class="tb" style="left:239px"><svg width="16" height="16" viewBox="0 0 16 16" shape-rendering="crispEdges"><rect x="0" y="2" width="16" height="1" fill="#000000"/><rect x="0" y="3" width="1" height="1" fill="#000000"/><rect x="1" y="3" width="1" height="1" fill="#D0D0F0"/><rect x="2" y="3" width="12" height="1" fill="#0000ff"/><rect x="14" y="3" width="1" height="1" fill="#D0D0F0"/><rect x="15" y="3" width="1" height="1" fill="#000000"/><rect x="0" y="4" width="1" height="1" fill="#000000"/><rect x="1" y="4" width="14" height="1" fill="#000080"/><rect x="15" y="4" width="1" height="1" fill="#000000"/><rect x="0" y="5" width="1" height="1" fill="#000000"/><rect x="1" y="5" width="14" height="1" fill="#ffffff"/><rect x="15" y="5" width="1" height="1" fill="#000000"/><rect x="0" y="6" width="1" height="1" fill="#000000"/><rect x="1" y="6" width="1" height="1" fill="#ffffff"/><rect x="2" y="6" width="2" height="1" fill="#000000"/><rect x="4" y="6" width="1" height="1" fill="#ffffff"/><rect x="5" y="6" width="2" height="1" fill="#000000"/><rect x="7" y="6" width="1" height="1" fill="#ffffff"/><rect x="8" y="6" width="2" height="1" fill="#000000"/><rect x="10" y="6" width="1" height="1" fill="#ffffff"/><rect x="11" y="6" width="3" height="1" fill="#000000"/><rect x="14" y="6" width="1" height="1" fill="#ffffff"/><rect x="15" y="6" width="1" height="1" fill="#000000"/><rect x="0" y="7" width="1" height="1" fill="#000000"/><rect x="1" y="7" width="14" height="1" fill="#ffffff"/><rect x="15" y="7" width="1" height="1" fill="#000000"/><rect x="0" y="8" width="1" height="1" fill="#000000"/><rect x="1" y="8" width="1" height="1" fill="#ffffff"/><rect x="2" y="8" width="2" height="1" fill="#000000"/><rect x="4" y="8" width="1" height="1" fill="#ffffff"/><rect x="5" y="8" width="2" height="1" fill="#000000"/><rect x="7" y="8" width="1" height="1" fill="#ffffff"/><rect x="8" y="8" width="2" height="1" fill="#000000"/><rect x="10" y="8" width="1" height="1" fill="#ffffff"/><rect x="11" y="8" width="3" height="1" fill="#000000"/><rect x="14" y="8" width="1" height="1" fill="#ffffff"/><rect x="15" y="8" width="1" height="1" fill="#000000"/><rect x="0" y="9" width="1" height="1" fill="#000000"/><rect x="1" y="9" width="14" height="1" fill="#ffffff"/><rect x="15" y="9" width="1" height="1" fill="#000000"/><rect x="0" y="10" width="1" height="1" fill="#000000"/><rect x="1" y="10" width="1" height="1" fill="#ffffff"/><rect x="2" y="10" width="2" height="1" fill="#000000"/><rect x="4" y="10" width="1" height="1" fill="#ffffff"/><rect x="5" y="10" width="2" height="1" fill="#000000"/><rect x="7" y="10" width="1" height="1" fill="#ffffff"/><rect x="8" y="10" width="2" height="1" fill="#000000"/><rect x="10" y="10" width="1" height="1" fill="#ffffff"/><rect x="11" y="10" width="3" height="1" fill="#000000"/><rect x="14" y="10" width="1" height="1" fill="#ffffff"/><rect x="15" y="10" width="1" height="1" fill="#000000"/><rect x="0" y="11" width="1" height="1" fill="#000000"/><rect x="1" y="11" width="14" height="1" fill="#ffffff"/><rect x="15" y="11" width="1" height="1" fill="#000000"/><rect x="0" y="12" width="1" height="1" fill="#000000"/><rect x="1" y="12" width="1" height="1" fill="#ffffff"/><rect x="2" y="12" width="2" height="1" fill="#000000"/><rect x="4" y="12" width="1" height="1" fill="#ffffff"/><rect x="5" y="12" width="2" height="1" fill="#000000"/><rect x="7" y="12" width="1" height="1" fill="#ffffff"/><rect x="8" y="12" width="2" height="1" fill="#000000"/><rect x="10" y="12" width="1" height="1" fill="#ffffff"/><rect x="11" y="12" width="3" height="1" fill="#000000"/><rect x="14" y="12" width="1" height="1" fill="#ffffff"/><rect x="15" y="12" width="1" height="1" fill="#000000"/><rect x="0" y="13" width="1" height="1" fill="#000000"/><rect x="1" y="13" width="14" height="1" fill="#ffffff"/><rect x="15" y="13" width="1" height="1" fill="#000000"/><rect x="0" y="14" width="16" height="1" fill="#000000"/></svg></div>
<div class="tb" style="left:278px"><svg width="16" height="16" viewBox="0 0 16 16" shape-rendering="crispEdges"><rect x="8" y="0" width="6" height="1" fill="#000000"/><rect x="8" y="1" width="1" height="1" fill="#000000"/><rect x="9" y="1" width="4" height="1" fill="#ffffff"/><rect x="13" y="1" width="2" height="1" fill="#000000"/><rect x="3" y="2" width="1" height="1" fill="#D0D0F0"/><rect x="4" y="2" width="2" height="1" fill="#000080"/><rect x="6" y="2" width="1" height="1" fill="#D0D0F0"/><rect x="8" y="2" width="1" height="1" fill="#000000"/><rect x="9" y="2" width="1" height="1" fill="#ffffff"/><rect x="10" y="2" width="1" height="1" fill="#000000"/><rect x="11" y="2" width="2" height="1" fill="#ffffff"/><rect x="13" y="2" width="1" height="1" fill="#000000"/><rect x="14" y="2" width="1" height="1" fill="#ffffff"/><rect x="15" y="2" width="1" height="1" fill="#000000"/><rect x="2" y="3" width="6" height="1" fill="#000080"/><rect x="8" y="3" width="1" height="1" fill="#000000"/><rect x="9" y="3" width="6" height="1" fill="#ffffff"/><rect x="15" y="3" width="1" height="1" fill="#000000"/><rect x="2" y="4" width="2" height="1" fill="#000080"/><rect x="5" y="4" width="3" height="1" fill="#000080"/><rect x="8" y="4" width="1" height="1" fill="#000000"/><rect x="9" y="4" width="1" height="1" fill="#ffffff"/><rect x="10" y="4" width="2" height="1" fill="#000000"/><rect x="12" y="4" width="3" height="1" fill="#ffffff"/><rect x="15" y="4" width="1" height="1" fill="#000000"/><rect x="1" y="5" width="1" height="1" fill="#D0D0F0"/><rect x="2" y="5" width="2" height="1" fill="#000080"/><rect x="5" y="5" width="2" height="1" fill="#000080"/><rect x="7" y="5" width="1" height="1" fill="#D0D0F0"/><rect x="8" y="5" width="1" height="1" fill="#000000"/><rect x="9" y="5" width="6" height="1" fill="#ffffff"/><rect x="15" y="5" width="1" height="1" fill="#000000"/><rect x="2" y="6" width="6" height="1" fill="#000080"/><rect x="8" y="6" width="1" height="1" fill="#000000"/><rect x="9" y="6" width="1" height="1" fill="#ffffff"/><rect x="10" y="6" width="4" height="1" fill="#000000"/><rect x="14" y="6" width="1" height="1" fill="#ffffff"/><rect x="15" y="6" width="1" height="1" fill="#000000"/><rect x="3" y="7" width="1" height="1" fill="#D0D0F0"/><rect x="4" y="7" width="4" height="1" fill="#000080"/><rect x="8" y="7" width="1" height="1" fill="#000000"/><rect x="9" y="7" width="6" height="1" fill="#ffffff"/><rect x="15" y="7" width="1" height="1" fill="#000000"/><rect x="2" y="8" width="1" height="1" fill="#D0D0F0"/><rect x="5" y="8" width="3" height="1" fill="#000080"/><rect x="8" y="8" width="8" height="1" fill="#000000"/><rect x="1" y="9" width="2" height="1" fill="#000080"/><rect x="5" y="9" width="2" height="1" fill="#000080"/><rect x="7" y="9" width="1" height="1" fill="#D0D0F0"/><rect x="8" y="9" width="1" height="1" fill="#000000"/><rect x="9" y="9" width="6" height="1" fill="#ffffff"/><rect x="15" y="9" width="1" height="1" fill="#000000"/><rect x="1" y="10" width="6" height="1" fill="#000080"/><rect x="8" y="10" width="8" height="1" fill="#000000"/><rect x="2" y="11" width="1" height="1" fill="#D0D0F0"/><rect x="3" y="11" width="2" height="1" fill="#000080"/><rect x="5" y="11" width="1" height="1" fill="#D0D0F0"/><rect x="7" y="11" width="1" height="1" fill="#000000"/><rect x="7" y="12" width="2" height="1" fill="#000000"/><rect x="8" y="13" width="2" height="1" fill="#000000"/><rect x="9" y="14" width="2" height="1" fill="#000000"/></svg></div>
<div class="tb" style="left:301px"><svg width="16" height="16" viewBox="0 0 16 16" shape-rendering="crispEdges"><rect x="0" y="0" width="7" height="1" fill="#000000"/><rect x="9" y="0" width="3" height="1" fill="#ff0000"/><rect x="0" y="1" width="1" height="1" fill="#000000"/><rect x="1" y="1" width="5" height="1" fill="#ffffff"/><rect x="6" y="1" width="2" height="1" fill="#000000"/><rect x="9" y="1" width="4" height="1" fill="#ff0000"/><rect x="0" y="2" width="1" height="1" fill="#000000"/><rect x="1" y="2" width="1" height="1" fill="#ffffff"/><rect x="2" y="2" width="2" height="1" fill="#000000"/><rect x="4" y="2" width="2" height="1" fill="#ffffff"/><rect x="6" y="2" width="1" height="1" fill="#000000"/><rect x="7" y="2" width="1" height="1" fill="#ffffff"/><rect x="8" y="2" width="1" height="1" fill="#000000"/><rect x="9" y="2" width="4" height="1" fill="#ff0000"/><rect x="0" y="3" width="1" height="1" fill="#000000"/><rect x="1" y="3" width="5" height="1" fill="#ffffff"/><rect x="6" y="3" width="3" height="1" fill="#000000"/><rect x="9" y="3" width="6" height="1" fill="#ff0000"/><rect x="0" y="4" width="1" height="1" fill="#000000"/><rect x="1" y="4" width="1" height="1" fill="#ffffff"/><rect x="2" y="4" width="3" height="1" fill="#000000"/><rect x="5" y="4" width="3" height="1" fill="#ffffff"/><rect x="8" y="4" width="1" height="1" fill="#000000"/><rect x="9" y="4" width="7" height="1" fill="#ff0000"/><rect x="0" y="5" width="1" height="1" fill="#000000"/><rect x="1" y="5" width="7" height="1" fill="#ffffff"/><rect x="8" y="5" width="1" height="1" fill="#000000"/><rect x="9" y="5" width="6" height="1" fill="#ff0000"/><rect x="0" y="6" width="1" height="1" fill="#000000"/><rect x="1" y="6" width="1" height="1" fill="#ffffff"/><rect x="2" y="6" width="5" height="1" fill="#000000"/><rect x="7" y="6" width="1" height="1" fill="#ffffff"/><rect x="8" y="6" width="1" height="1" fill="#000000"/><rect x="9" y="6" width="5" height="1" fill="#ff0000"/><rect x="0" y="7" width="1" height="1" fill="#000000"/><rect x="1" y="7" width="7" height="1" fill="#ffffff"/><rect x="8" y="7" width="1" height="1" fill="#000000"/><rect x="10" y="7" width="3" height="1" fill="#ff0000"/><rect x="0" y="8" width="1" height="1" fill="#000000"/><rect x="1" y="8" width="1" height="1" fill="#ffffff"/><rect x="2" y="8" width="3" height="1" fill="#000000"/><rect x="5" y="8" width="1" height="1" fill="#ffffff"/><rect x="6" y="8" width="4" height="1" fill="#000000"/><rect x="11" y="8" width="1" height="1" fill="#ff0000"/><rect x="13" y="8" width="1" height="1" fill="#000000"/><rect x="0" y="9" width="1" height="1" fill="#000000"/><rect x="1" y="9" width="7" height="1" fill="#ffffff"/><rect x="8" y="9" width="1" height="1" fill="#000000"/><rect x="9" y="9" width="1" height="1" fill="#ffff80"/><rect x="10" y="9" width="4" height="1" fill="#808000"/><rect x="14" y="9" width="1" height="1" fill="#000000"/><rect x="0" y="10" width="1" height="1" fill="#000000"/><rect x="1" y="10" width="7" height="1" fill="#ffffff"/><rect x="8" y="10" width="1" height="1" fill="#000000"/><rect x="9" y="10" width="4" height="1" fill="#ffff80"/><rect x="13" y="10" width="1" height="1" fill="#ffffff"/><rect x="14" y="10" width="1" height="1" fill="#000000"/><rect x="0" y="11" width="9" height="1" fill="#000000"/><rect x="9" y="11" width="4" height="1" fill="#ffff80"/><rect x="13" y="11" width="1" height="1" fill="#ffffff"/><rect x="14" y="11" width="1" height="1" fill="#000000"/><rect x="6" y="12" width="1" height="1" fill="#000000"/><rect x="7" y="12" width="1" height="1" fill="#ffff80"/><rect x="8" y="12" width="6" height="1" fill="#ffffff"/><rect x="14" y="12" width="1" height="1" fill="#000000"/><rect x="6" y="13" width="1" height="1" fill="#000000"/><rect x="7" y="13" width="1" height="1" fill="#ffff80"/><rect x="8" y="13" width="6" height="1" fill="#ffffff"/><rect x="14" y="13" width="1" height="1" fill="#000000"/><rect x="6" y="14" width="1" height="1" fill="#000000"/><rect x="7" y="14" width="1" height="1" fill="#ffff80"/><rect x="8" y="14" width="6" height="1" fill="#ffffff"/><rect x="14" y="14" width="1" height="1" fill="#000000"/><rect x="6" y="15" width="1" height="1" fill="#000000"/><rect x="14" y="15" width="1" height="1" fill="#000000"/></svg></div>
<div class="tb" style="left:324px"><svg width="16" height="16" viewBox="0 0 16 16" shape-rendering="crispEdges"><rect x="0" y="1" width="8" height="1" fill="#000000"/><rect x="0" y="2" width="1" height="1" fill="#000000"/><rect x="1" y="2" width="6" height="1" fill="#ffffff"/><rect x="7" y="2" width="2" height="1" fill="#000000"/><rect x="0" y="3" width="1" height="1" fill="#000000"/><rect x="1" y="3" width="1" height="1" fill="#ffffff"/><rect x="2" y="3" width="2" height="1" fill="#000000"/><rect x="4" y="3" width="3" height="1" fill="#ffffff"/><rect x="7" y="3" width="1" height="1" fill="#000000"/><rect x="8" y="3" width="1" height="1" fill="#ffffff"/><rect x="9" y="3" width="1" height="1" fill="#000000"/><rect x="0" y="4" width="1" height="1" fill="#000000"/><rect x="1" y="4" width="6" height="1" fill="#ffffff"/><rect x="7" y="4" width="4" height="1" fill="#000000"/><rect x="0" y="5" width="1" height="1" fill="#000000"/><rect x="1" y="5" width="1" height="1" fill="#ffffff"/><rect x="2" y="5" width="2" height="1" fill="#000000"/><rect x="4" y="5" width="6" height="1" fill="#ffffff"/><rect x="10" y="5" width="2" height="1" fill="#000000"/><rect x="0" y="6" width="1" height="1" fill="#000000"/><rect x="1" y="6" width="9" height="1" fill="#ffffff"/><rect x="10" y="6" width="1" height="1" fill="#ff0000"/><rect x="11" y="6" width="2" height="1" fill="#000000"/><rect x="0" y="7" width="1" height="1" fill="#000000"/><rect x="1" y="7" width="1" height="1" fill="#ffffff"/><rect x="2" y="7" width="2" height="1" fill="#000000"/><rect x="4" y="7" width="6" height="1" fill="#ffffff"/><rect x="10" y="7" width="2" height="1" fill="#ff0000"/><rect x="12" y="7" width="2" height="1" fill="#000000"/><rect x="0" y="8" width="1" height="1" fill="#000000"/><rect x="1" y="8" width="4" height="1" fill="#ffffff"/><rect x="5" y="8" width="8" height="1" fill="#ff0000"/><rect x="13" y="8" width="2" height="1" fill="#000000"/><rect x="0" y="9" width="1" height="1" fill="#000000"/><rect x="1" y="9" width="1" height="1" fill="#ffffff"/><rect x="2" y="9" width="2" height="1" fill="#000000"/><rect x="4" y="9" width="1" height="1" fill="#ffffff"/><rect x="5" y="9" width="9" height="1" fill="#ff0000"/><rect x="14" y="9" width="2" height="1" fill="#000000"/><rect x="0" y="10" width="1" height="1" fill="#000000"/><rect x="1" y="10" width="4" height="1" fill="#ffffff"/><rect x="5" y="10" width="9" height="1" fill="#ff0000"/><rect x="14" y="10" width="1" height="1" fill="#000000"/><rect x="0" y="11" width="1" height="1" fill="#000000"/><rect x="1" y="11" width="4" height="1" fill="#ffffff"/><rect x="5" y="11" width="8" height="1" fill="#ff0000"/><rect x="13" y="11" width="1" height="1" fill="#000000"/><rect x="0" y="12" width="5" height="1" fill="#000000"/><rect x="5" y="12" width="7" height="1" fill="#ff0000"/><rect x="12" y="12" width="1" height="1" fill="#000000"/><rect x="10" y="13" width="1" height="1" fill="#ff0000"/><rect x="11" y="13" width="1" height="1" fill="#000000"/><rect x="10" y="14" width="1" height="1" fill="#000000"/></svg></div>
<div class="tb" style="left:347px"><svg width="16" height="16" viewBox="0 0 16 16" shape-rendering="crispEdges"><rect x="2" y="0" width="3" height="1" fill="#000000"/><rect x="12" y="0" width="1" height="1" fill="#000000"/><rect x="1" y="1" width="5" height="1" fill="#000000"/><rect x="12" y="1" width="2" height="1" fill="#000000"/><rect x="0" y="2" width="7" height="1" fill="#000000"/><rect x="12" y="2" width="1" height="1" fill="#000000"/><rect x="13" y="2" width="1" height="1" fill="#ffff80"/><rect x="14" y="2" width="1" height="1" fill="#000000"/><rect x="0" y="3" width="7" height="1" fill="#000000"/><rect x="7" y="3" width="1" height="1" fill="#00ffff"/><rect x="12" y="3" width="1" height="1" fill="#000000"/><rect x="13" y="3" width="1" height="1" fill="#ffff80"/><rect x="14" y="3" width="1" height="1" fill="#000000"/><rect x="1" y="4" width="5" height="1" fill="#000000"/><rect x="6" y="4" width="2" height="1" fill="#00ffff"/><rect x="8" y="4" width="2" height="1" fill="#000000"/><rect x="12" y="4" width="1" height="1" fill="#000000"/><rect x="13" y="4" width="1" height="1" fill="#ffff80"/><rect x="14" y="4" width="1" height="1" fill="#000000"/><rect x="2" y="5" width="3" height="1" fill="#000000"/><rect x="5" y="5" width="2" height="1" fill="#00ffff"/><rect x="7" y="5" width="1" height="1" fill="#000000"/><rect x="8" y="5" width="2" height="1" fill="#ffff80"/><rect x="10" y="5" width="3" height="1" fill="#000000"/><rect x="13" y="5" width="1" height="1" fill="#ffff80"/><rect x="14" y="5" width="1" height="1" fill="#000000"/><rect x="3" y="6" width="3" height="1" fill="#00ffff"/><rect x="6" y="6" width="1" height="1" fill="#000000"/><rect x="7" y="6" width="4" height="1" fill="#ffff80"/><rect x="11" y="6" width="2" height="1" fill="#000000"/><rect x="13" y="6" width="1" height="1" fill="#ffff80"/><rect x="14" y="6" width="1" height="1" fill="#000000"/><rect x="4" y="7" width="1" height="1" fill="#00ffff"/><rect x="5" y="7" width="1" height="1" fill="#000000"/><rect x="6" y="7" width="2" height="1" fill="#ffff80"/><rect x="8" y="7" width="1" height="1" fill="#000000"/><rect x="9" y="7" width="2" height="1" fill="#ffff80"/><rect x="11" y="7" width="2" height="1" fill="#000000"/><rect x="13" y="7" width="1" height="1" fill="#ffff80"/><rect x="14" y="7" width="1" height="1" fill="#000000"/><rect x="5" y="8" width="1" height="1" fill="#000000"/><rect x="6" y="8" width="1" height="1" fill="#ffff80"/><rect x="7" y="8" width="1" height="1" fill="#000000"/><rect x="8" y="8" width="2" height="1" fill="#ffff80"/><rect x="10" y="8" width="1" height="1" fill="#000000"/><rect x="11" y="8" width="1" height="1" fill="#ffff80"/><rect x="12" y="8" width="1" height="1" fill="#000000"/><rect x="13" y="8" width="1" height="1" fill="#ffff80"/><rect x="14" y="8" width="1" height="1" fill="#000000"/><rect x="6" y="9" width="1" height="1" fill="#000000"/><rect x="7" y="9" width="1" height="1" fill="#ffff80"/><rect x="8" y="9" width="1" height="1" fill="#000000"/><rect x="9" y="9" width="2" height="1" fill="#ffff80"/><rect x="11" y="9" width="1" height="1" fill="#000000"/><rect x="12" y="9" width="1" height="1" fill="#ffff80"/><rect x="13" y="9" width="2" height="1" fill="#000000"/><rect x="6" y="10" width="1" height="1" fill="#000000"/><rect x="7" y="10" width="2" height="1" fill="#ffff80"/><rect x="9" y="10" width="1" height="1" fill="#000000"/><rect x="10" y="10" width="2" height="1" fill="#ffff80"/><rect x="12" y="10" width="3" height="1" fill="#000000"/><rect x="7" y="11" width="1" height="1" fill="#000000"/><rect x="8" y="11" width="4" height="1" fill="#ffff80"/><rect x="12" y="11" width="3" height="1" fill="#000000"/><rect x="8" y="12" width="6" height="1" fill="#000000"/><rect x="11" y="13" width="1" height="1" fill="#ff0000"/><rect x="12" y="13" width="1" height="1" fill="#000000"/><rect x="0" y="14" width="7" height="1" fill="#808080"/><rect x="8" y="14" width="1" height="1" fill="#808080"/><rect x="11" y="14" width="2" height="1" fill="#ff0000"/><rect x="14" y="14" width="1" height="1" fill="#808080"/></svg></div>
<div class="tb" style="left:370px"><svg width="16" height="16" viewBox="0 0 16 16" shape-rendering="crispEdges"><rect x="2" y="1" width="11" height="1" fill="#000000"/><rect x="3" y="2" width="3" height="1" fill="#000000"/><rect x="11" y="2" width="2" height="1" fill="#000000"/><rect x="4" y="3" width="3" height="1" fill="#000000"/><rect x="12" y="3" width="1" height="1" fill="#000000"/><rect x="5" y="4" width="3" height="1" fill="#000000"/><rect x="6" y="5" width="3" height="1" fill="#000000"/><rect x="7" y="6" width="3" height="1" fill="#000000"/><rect x="8" y="7" width="2" height="1" fill="#000000"/><rect x="7" y="8" width="2" height="1" fill="#000000"/><rect x="6" y="9" width="2" height="1" fill="#000000"/><rect x="5" y="10" width="2" height="1" fill="#000000"/><rect x="12" y="10" width="1" height="1" fill="#000000"/><rect x="4" y="11" width="2" height="1" fill="#000000"/><rect x="12" y="11" width="1" height="1" fill="#000000"/><rect x="3" y="12" width="2" height="1" fill="#000000"/><rect x="11" y="12" width="2" height="1" fill="#000000"/><rect x="2" y="13" width="11" height="1" fill="#000000"/></svg></div>

<!-- MDI client -->
<div class="a sunk" style="left:4px;top:71px;width:682px;height:377px"></div>

<!-- child window -->
<div class="a raised" style="left:6px;top:73px;width:668px;height:364px"></div>
<div class="a" style="left:10px;top:77px;width:660px;height:18px;background:linear-gradient(to right,#0A246A,#A6CAF0)"></div>
<div class="a" style="left:12px;top:78px"><svg width="16" height="16" viewBox="0 0 16 16" shape-rendering="crispEdges"><rect x="4" y="0" width="8" height="1" fill="#D4D4DC"/><rect x="3" y="1" width="5" height="1" fill="#D4D4DC"/><rect x="8" y="1" width="1" height="1" fill="#000080"/><rect x="9" y="1" width="5" height="1" fill="#D4D4DC"/><rect x="2" y="2" width="6" height="1" fill="#D4D4DC"/><rect x="8" y="2" width="1" height="1" fill="#000080"/><rect x="9" y="2" width="1" height="1" fill="#A0A0E0"/><rect x="10" y="2" width="5" height="1" fill="#D4D4DC"/><rect x="1" y="3" width="7" height="1" fill="#D4D4DC"/><rect x="8" y="3" width="2" height="1" fill="#000080"/><rect x="10" y="3" width="1" height="1" fill="#A0A0E0"/><rect x="11" y="3" width="5" height="1" fill="#D4D4DC"/><rect x="0" y="4" width="9" height="1" fill="#D4D4DC"/><rect x="9" y="4" width="1" height="1" fill="#000080"/><rect x="10" y="4" width="1" height="1" fill="#A0A0E0"/><rect x="11" y="4" width="5" height="1" fill="#D4D4DC"/><rect x="0" y="5" width="9" height="1" fill="#D4D4DC"/><rect x="9" y="5" width="2" height="1" fill="#000080"/><rect x="11" y="5" width="1" height="1" fill="#A0A0E0"/><rect x="12" y="5" width="4" height="1" fill="#D4D4DC"/><rect x="0" y="6" width="9" height="1" fill="#D4D4DC"/><rect x="9" y="6" width="2" height="1" fill="#000080"/><rect x="11" y="6" width="1" height="1" fill="#A0A0E0"/><rect x="12" y="6" width="4" height="1" fill="#D4D4DC"/><rect x="0" y="7" width="3" height="1" fill="#D4D4DC"/><rect x="3" y="7" width="5" height="1" fill="#000080"/><rect x="8" y="7" width="1" height="1" fill="#D4D4DC"/><rect x="9" y="7" width="3" height="1" fill="#000080"/><rect x="12" y="7" width="1" height="1" fill="#A0A0E0"/><rect x="13" y="7" width="3" height="1" fill="#D4D4DC"/><rect x="0" y="8" width="8" height="1" fill="#D4D4DC"/><rect x="8" y="8" width="4" height="1" fill="#000080"/><rect x="12" y="8" width="1" height="1" fill="#A0A0E0"/><rect x="13" y="8" width="3" height="1" fill="#D4D4DC"/><rect x="0" y="9" width="3" height="1" fill="#D4D4DC"/><rect x="3" y="9" width="10" height="1" fill="#000080"/><rect x="13" y="9" width="1" height="1" fill="#A0A0E0"/><rect x="14" y="9" width="2" height="1" fill="#D4D4DC"/><rect x="0" y="10" width="8" height="1" fill="#D4D4DC"/><rect x="8" y="10" width="5" height="1" fill="#000080"/><rect x="13" y="10" width="1" height="1" fill="#A0A0E0"/><rect x="14" y="10" width="2" height="1" fill="#D4D4DC"/><rect x="0" y="11" width="3" height="1" fill="#D4D4DC"/><rect x="3" y="11" width="10" height="1" fill="#000080"/><rect x="13" y="11" width="1" height="1" fill="#A0A0E0"/><rect x="14" y="11" width="2" height="1" fill="#D4D4DC"/><rect x="0" y="12" width="8" height="1" fill="#D4D4DC"/><rect x="8" y="12" width="4" height="1" fill="#000080"/><rect x="12" y="12" width="1" height="1" fill="#A0A0E0"/><rect x="13" y="12" width="3" height="1" fill="#D4D4DC"/><rect x="1" y="13" width="3" height="1" fill="#D4D4DC"/><rect x="4" y="13" width="8" height="1" fill="#000080"/><rect x="12" y="13" width="1" height="1" fill="#A0A0E0"/><rect x="13" y="13" width="2" height="1" fill="#D4D4DC"/><rect x="2" y="14" width="7" height="1" fill="#D4D4DC"/><rect x="9" y="14" width="3" height="1" fill="#000080"/><rect x="12" y="14" width="2" height="1" fill="#D4D4DC"/><rect x="3" y="15" width="10" height="1" fill="#D4D4DC"/></svg></div>
<div class="t bt" style="left:30px;top:81px;letter-spacing:0.7px">Parts</div>
<div class="cap" style="left:618px;top:79px"><svg width="16" height="14" shape-rendering="crispEdges"><rect x="4" y="9" width="6" height="2"/></svg></div>
<div class="cap" style="left:634px;top:79px"><svg width="16" height="14" shape-rendering="crispEdges"><rect x="3" y="2" width="9" height="2"/><rect x="3" y="4" width="1" height="7"/><rect x="11" y="4" width="1" height="7"/><rect x="3" y="10" width="9" height="1"/></svg></div>
<div class="cap" style="left:652px;top:79px"><svg width="16" height="14" shape-rendering="crispEdges"><path d="M4 3h2v1h1v1h2v-1h1v-1h2v1h-1v1h-1v1h-1v1h1v1h1v1h1v1h-2v-1h-1v-1h-2v1h-1v1h-2v-1h1v-1h1v-1h1v-1h-1v-1h-1v-1h-1z"/></svg></div>

<!-- listview -->
<div class="a sunk" style="left:10px;top:96px;width:660px;height:285px;background:#fff"></div>
<div class="hd" style="left:12px;width:117px"></div>
<div class="hd" style="left:129px;width:241px"></div>
<div class="hd" style="left:370px;width:117px"></div>
<div class="hd" style="left:487px;width:117px"></div>
<div class="t" style="left:15px;top:101px">Part no</div>
<div class="t" style="left:132px;top:101px">Description</div>
<div class="t" style="left:373px;top:101px">Price</div>
<div class="t" style="left:490px;top:101px">Notes</div>
<!-- selected row -->
<div class="a" style="left:12px;top:119px;width:592px;height:22px;background:#0A246A"></div>
<!-- grid -->
<div class="gh" style="top:141px"></div>
<div class="gh" style="top:163px"></div>
<div class="gh" style="top:185px"></div>
<div class="gh" style="top:207px"></div>
<div class="gh" style="top:229px"></div>
<div class="gh" style="top:260px"></div>
<div class="gv" style="left:128px;top:141px;height:120px"></div>
<div class="gv" style="left:369px;top:141px;height:120px"></div>
<div class="gv" style="left:486px;top:141px;height:120px"></div>
<div class="gv" style="left:603px;top:119px;height:142px"></div>
<div class="gv" style="left:128px;top:119px;height:22px;background:#A6B4DC"></div>
<div class="gv" style="left:369px;top:119px;height:22px;background:#A6B4DC"></div>
<div class="gv" style="left:486px;top:119px;height:22px;background:#A6B4DC"></div>
<!-- rows -->
<div class="t sel" style="left:15px;top:123px">HB2727</div>
<div class="t sel" style="left:132px;top:123px">Air ioniser</div>
<div class="t sel" style="left:373px;top:123px">45.20</div>
<div class="t sel" style="left:490px;top:123px;transform:scaleX(0.89)">Only in black and red</div>

<div class="t" style="left:15px;top:145px">UG20</div>
<div class="t" style="left:132px;top:145px">Tyre scraper</div>
<div class="t" style="left:373px;top:145px">12.59</div>

<div class="t" style="left:15px;top:167px">UG22</div>
<div class="t" style="left:132px;top:167px">Type black</div>
<div class="t" style="left:373px;top:167px">10.99</div>
<div class="t" style="left:490px;top:167px">Rebadged aerosol</div>

<div class="t" style="left:15px;top:189px">UY668</div>
<div class="t" style="left:132px;top:189px">Fascia adaptor</div>
<div class="t" style="left:373px;top:189px">6.99</div>
<div class="t" style="left:490px;top:189px">Fits Sanyo, Aiwa</div>

<div class="t" style="left:15px;top:211px">UY88</div>
<div class="t" style="left:132px;top:211px">Aerial extender</div>
<div class="t" style="left:373px;top:211px">43.99</div>

<div class="t" style="left:15px;top:233px">UJ211</div>
<div class="t" style="left:132px;top:233px">Bulb replacement set</div>
<div class="t" style="left:373px;top:233px">24.99</div>
<div class="t" style="left:490px;top:233px;transform:scaleX(0.865)">Mains, sides, indicators,</div>
<div class="t" style="left:490px;top:246px;transform:scaleX(0.89)">tails, brakes</div>

<!-- button panel -->
<div class="a" style="left:10px;top:381px;width:660px;height:34px;box-shadow:inset 1px 1px #fff,inset -1px -1px #808080"></div>
<div class="btn" style="left:18px;top:386px;width:68px;height:25px;box-shadow:inset -1px -1px #000,inset 1px 1px #000,inset -2px -2px #404040,inset 2px 2px #fff,inset -3px -3px #808080"></div>
<div class="a" style="left:22px;top:390px;width:61px;height:17px;border:1px dotted #000"></div>
<div class="t" style="left:41px;top:392px">Done</div>
<div class="btn" style="left:94px;top:386px;width:86px;height:25px"></div>
<div class="t" style="left:108px;top:393px">New Record</div>
<div class="btn" style="left:187px;top:386px;width:60px;height:25px"></div>
<div class="t" style="left:206px;top:393px;transform:scaleX(0.84)">Filters</div>
<div class="btn" style="left:255px;top:386px;width:64px;height:25px"></div>
<div class="t" style="left:272px;top:393px">Sorting</div>
<div class="btn" style="left:327px;top:386px;width:60px;height:25px"></div>
<div class="t" style="left:347px;top:393px">Find</div>
<div class="btn" style="left:395px;top:386px;width:71px;height:25px"></div>
<div class="t" style="left:405px;top:393px">Find Again</div>
<!-- dropdown -->
<div class="a sunk" style="left:474px;top:388px;width:185px;height:21px;background:#fff"></div>
<div class="t" style="left:478px;top:394px">Edit Views...</div>
<div class="btn" style="left:641px;top:390px;width:16px;height:17px;box-shadow:inset -1px -1px #404040,inset 1px 1px #D4D0C8,inset -2px -2px #808080,inset 2px 2px #fff"><svg width="16" height="17" shape-rendering="crispEdges" style="position:absolute;left:0;top:0"><rect x="4" y="6" width="7" height="1"/><rect x="5" y="7" width="5" height="1"/><rect x="6" y="8" width="3" height="1"/><rect x="7" y="9" width="1" height="1"/></svg></div>

<!-- child status bar -->
<div class="a thin" style="left:10px;top:417px;width:61px;height:17px"></div>
<div class="t" style="left:13px;top:420px">OK</div>
<div class="a thin" style="left:72px;top:417px;width:59px;height:17px"></div>
<div class="t" style="left:74px;top:420px">Modified</div>
<div class="a thin" style="left:132px;top:417px;width:79px;height:17px"></div>
<div class="a thin" style="left:212px;top:417px;width:58px;height:17px"></div>
<div class="t" style="left:214px;top:420px">6/6</div>
<div class="a thin" style="left:272px;top:417px;width:398px;height:17px"></div>
<div class="t" style="left:274px;top:420px">Untitled*</div>
<svg class="a" style="left:657px;top:421px" width="12" height="12" shape-rendering="crispEdges"><rect x="0" y="11" width="1" height="1" fill="#fff"/><rect x="1" y="10" width="1" height="1" fill="#fff"/><rect x="1" y="11" width="1" height="1" fill="#808080"/><rect x="2" y="9" width="1" height="1" fill="#fff"/><rect x="2" y="10" width="1" height="1" fill="#808080"/><rect x="2" y="11" width="1" height="1" fill="#808080"/><rect x="3" y="8" width="1" height="1" fill="#fff"/><rect x="3" y="9" width="1" height="1" fill="#808080"/><rect x="3" y="10" width="1" height="1" fill="#808080"/><rect x="4" y="7" width="1" height="1" fill="#fff"/><rect x="4" y="8" width="1" height="1" fill="#808080"/><rect x="4" y="9" width="1" height="1" fill="#808080"/><rect x="4" y="11" width="1" height="1" fill="#fff"/><rect x="5" y="6" width="1" height="1" fill="#fff"/><rect x="5" y="7" width="1" height="1" fill="#808080"/><rect x="5" y="8" width="1" height="1" fill="#808080"/><rect x="5" y="10" width="1" height="1" fill="#fff"/><rect x="5" y="11" width="1" height="1" fill="#808080"/><rect x="6" y="5" width="1" height="1" fill="#fff"/><rect x="6" y="6" width="1" height="1" fill="#808080"/><rect x="6" y="7" width="1" height="1" fill="#808080"/><rect x="6" y="9" width="1" height="1" fill="#fff"/><rect x="6" y="10" width="1" height="1" fill="#808080"/><rect x="6" y="11" width="1" height="1" fill="#808080"/><rect x="7" y="4" width="1" height="1" fill="#fff"/><rect x="7" y="5" width="1" height="1" fill="#808080"/><rect x="7" y="6" width="1" height="1" fill="#808080"/><rect x="7" y="8" width="1" height="1" fill="#fff"/><rect x="7" y="9" width="1" height="1" fill="#808080"/><rect x="7" y="10" width="1" height="1" fill="#808080"/><rect x="8" y="3" width="1" height="1" fill="#fff"/><rect x="8" y="4" width="1" height="1" fill="#808080"/><rect x="8" y="5" width="1" height="1" fill="#808080"/><rect x="8" y="7" width="1" height="1" fill="#fff"/><rect x="8" y="8" width="1" height="1" fill="#808080"/><rect x="8" y="9" width="1" height="1" fill="#808080"/><rect x="8" y="11" width="1" height="1" fill="#fff"/><rect x="9" y="2" width="1" height="1" fill="#fff"/><rect x="9" y="3" width="1" height="1" fill="#808080"/><rect x="9" y="4" width="1" height="1" fill="#808080"/><rect x="9" y="6" width="1" height="1" fill="#fff"/><rect x="9" y="7" width="1" height="1" fill="#808080"/><rect x="9" y="8" width="1" height="1" fill="#808080"/><rect x="9" y="10" width="1" height="1" fill="#fff"/><rect x="9" y="11" width="1" height="1" fill="#808080"/><rect x="10" y="1" width="1" height="1" fill="#fff"/><rect x="10" y="2" width="1" height="1" fill="#808080"/><rect x="10" y="3" width="1" height="1" fill="#808080"/><rect x="10" y="5" width="1" height="1" fill="#fff"/><rect x="10" y="6" width="1" height="1" fill="#808080"/><rect x="10" y="7" width="1" height="1" fill="#808080"/><rect x="10" y="9" width="1" height="1" fill="#fff"/><rect x="10" y="10" width="1" height="1" fill="#808080"/><rect x="10" y="11" width="1" height="1" fill="#808080"/><rect x="11" y="0" width="1" height="1" fill="#fff"/><rect x="11" y="1" width="1" height="1" fill="#808080"/><rect x="11" y="2" width="1" height="1" fill="#808080"/><rect x="11" y="4" width="1" height="1" fill="#fff"/><rect x="11" y="5" width="1" height="1" fill="#808080"/><rect x="11" y="6" width="1" height="1" fill="#808080"/><rect x="11" y="8" width="1" height="1" fill="#fff"/><rect x="11" y="9" width="1" height="1" fill="#808080"/><rect x="11" y="10" width="1" height="1" fill="#808080"/></svg>

<!-- main status bar -->
<div class="a thin" style="left:4px;top:450px;width:51px;height:17px"></div>
<div class="a thin" style="left:56px;top:450px;width:630px;height:17px"></div>
<svg class="a" style="left:673px;top:454px" width="12" height="12" shape-rendering="crispEdges"><rect x="0" y="11" width="1" height="1" fill="#fff"/><rect x="1" y="10" width="1" height="1" fill="#fff"/><rect x="1" y="11" width="1" height="1" fill="#808080"/><rect x="2" y="9" width="1" height="1" fill="#fff"/><rect x="2" y="10" width="1" height="1" fill="#808080"/><rect x="2" y="11" width="1" height="1" fill="#808080"/><rect x="3" y="8" width="1" height="1" fill="#fff"/><rect x="3" y="9" width="1" height="1" fill="#808080"/><rect x="3" y="10" width="1" height="1" fill="#808080"/><rect x="4" y="7" width="1" height="1" fill="#fff"/><rect x="4" y="8" width="1" height="1" fill="#808080"/><rect x="4" y="9" width="1" height="1" fill="#808080"/><rect x="4" y="11" width="1" height="1" fill="#fff"/><rect x="5" y="6" width="1" height="1" fill="#fff"/><rect x="5" y="7" width="1" height="1" fill="#808080"/><rect x="5" y="8" width="1" height="1" fill="#808080"/><rect x="5" y="10" width="1" height="1" fill="#fff"/><rect x="5" y="11" width="1" height="1" fill="#808080"/><rect x="6" y="5" width="1" height="1" fill="#fff"/><rect x="6" y="6" width="1" height="1" fill="#808080"/><rect x="6" y="7" width="1" height="1" fill="#808080"/><rect x="6" y="9" width="1" height="1" fill="#fff"/><rect x="6" y="10" width="1" height="1" fill="#808080"/><rect x="6" y="11" width="1" height="1" fill="#808080"/><rect x="7" y="4" width="1" height="1" fill="#fff"/><rect x="7" y="5" width="1" height="1" fill="#808080"/><rect x="7" y="6" width="1" height="1" fill="#808080"/><rect x="7" y="8" width="1" height="1" fill="#fff"/><rect x="7" y="9" width="1" height="1" fill="#808080"/><rect x="7" y="10" width="1" height="1" fill="#808080"/><rect x="8" y="3" width="1" height="1" fill="#fff"/><rect x="8" y="4" width="1" height="1" fill="#808080"/><rect x="8" y="5" width="1" height="1" fill="#808080"/><rect x="8" y="7" width="1" height="1" fill="#fff"/><rect x="8" y="8" width="1" height="1" fill="#808080"/><rect x="8" y="9" width="1" height="1" fill="#808080"/><rect x="8" y="11" width="1" height="1" fill="#fff"/><rect x="9" y="2" width="1" height="1" fill="#fff"/><rect x="9" y="3" width="1" height="1" fill="#808080"/><rect x="9" y="4" width="1" height="1" fill="#808080"/><rect x="9" y="6" width="1" height="1" fill="#fff"/><rect x="9" y="7" width="1" height="1" fill="#808080"/><rect x="9" y="8" width="1" height="1" fill="#808080"/><rect x="9" y="10" width="1" height="1" fill="#fff"/><rect x="9" y="11" width="1" height="1" fill="#808080"/><rect x="10" y="1" width="1" height="1" fill="#fff"/><rect x="10" y="2" width="1" height="1" fill="#808080"/><rect x="10" y="3" width="1" height="1" fill="#808080"/><rect x="10" y="5" width="1" height="1" fill="#fff"/><rect x="10" y="6" width="1" height="1" fill="#808080"/><rect x="10" y="7" width="1" height="1" fill="#808080"/><rect x="10" y="9" width="1" height="1" fill="#fff"/><rect x="10" y="10" width="1" height="1" fill="#808080"/><rect x="10" y="11" width="1" height="1" fill="#808080"/><rect x="11" y="0" width="1" height="1" fill="#fff"/><rect x="11" y="1" width="1" height="1" fill="#808080"/><rect x="11" y="2" width="1" height="1" fill="#808080"/><rect x="11" y="4" width="1" height="1" fill="#fff"/><rect x="11" y="5" width="1" height="1" fill="#808080"/><rect x="11" y="6" width="1" height="1" fill="#808080"/><rect x="11" y="8" width="1" height="1" fill="#fff"/><rect x="11" y="9" width="1" height="1" fill="#808080"/><rect x="11" y="10" width="1" height="1" fill="#808080"/></svg>

<div class="a" style="left:594px;top:342px"><svg width="16" height="21" viewBox="0 0 16 21" shape-rendering="crispEdges"><rect x="0" y="0" width="1" height="1" fill="#000000"/><rect x="0" y="1" width="2" height="1" fill="#000000"/><rect x="0" y="2" width="1" height="1" fill="#000000"/><rect x="1" y="2" width="1" height="1" fill="#ffffff"/><rect x="2" y="2" width="1" height="1" fill="#000000"/><rect x="0" y="3" width="1" height="1" fill="#000000"/><rect x="1" y="3" width="2" height="1" fill="#ffffff"/><rect x="3" y="3" width="1" height="1" fill="#000000"/><rect x="0" y="4" width="1" height="1" fill="#000000"/><rect x="1" y="4" width="3" height="1" fill="#ffffff"/><rect x="4" y="4" width="1" height="1" fill="#000000"/><rect x="0" y="5" width="1" height="1" fill="#000000"/><rect x="1" y="5" width="4" height="1" fill="#ffffff"/><rect x="5" y="5" width="1" height="1" fill="#000000"/><rect x="0" y="6" width="1" height="1" fill="#000000"/><rect x="1" y="6" width="5" height="1" fill="#ffffff"/><rect x="6" y="6" width="1" height="1" fill="#000000"/><rect x="0" y="7" width="1" height="1" fill="#000000"/><rect x="1" y="7" width="6" height="1" fill="#ffffff"/><rect x="7" y="7" width="1" height="1" fill="#000000"/><rect x="0" y="8" width="1" height="1" fill="#000000"/><rect x="1" y="8" width="7" height="1" fill="#ffffff"/><rect x="8" y="8" width="1" height="1" fill="#000000"/><rect x="0" y="9" width="1" height="1" fill="#000000"/><rect x="1" y="9" width="8" height="1" fill="#ffffff"/><rect x="9" y="9" width="1" height="1" fill="#000000"/><rect x="0" y="10" width="1" height="1" fill="#000000"/><rect x="1" y="10" width="9" height="1" fill="#ffffff"/><rect x="10" y="10" width="1" height="1" fill="#000000"/><rect x="0" y="11" width="1" height="1" fill="#000000"/><rect x="1" y="11" width="6" height="1" fill="#ffffff"/><rect x="7" y="11" width="5" height="1" fill="#000000"/><rect x="0" y="12" width="1" height="1" fill="#000000"/><rect x="1" y="12" width="3" height="1" fill="#ffffff"/><rect x="4" y="12" width="1" height="1" fill="#000000"/><rect x="5" y="12" width="2" height="1" fill="#ffffff"/><rect x="7" y="12" width="1" height="1" fill="#000000"/><rect x="0" y="13" width="1" height="1" fill="#000000"/><rect x="1" y="13" width="2" height="1" fill="#ffffff"/><rect x="3" y="13" width="2" height="1" fill="#000000"/><rect x="5" y="13" width="2" height="1" fill="#ffffff"/><rect x="7" y="13" width="1" height="1" fill="#000000"/><rect x="0" y="14" width="1" height="1" fill="#000000"/><rect x="1" y="14" width="1" height="1" fill="#ffffff"/><rect x="2" y="14" width="1" height="1" fill="#000000"/><rect x="5" y="14" width="1" height="1" fill="#000000"/><rect x="6" y="14" width="2" height="1" fill="#ffffff"/><rect x="8" y="14" width="1" height="1" fill="#000000"/><rect x="0" y="15" width="2" height="1" fill="#000000"/><rect x="5" y="15" width="1" height="1" fill="#000000"/><rect x="6" y="15" width="2" height="1" fill="#ffffff"/><rect x="8" y="15" width="1" height="1" fill="#000000"/><rect x="0" y="16" width="1" height="1" fill="#000000"/><rect x="6" y="16" width="1" height="1" fill="#000000"/><rect x="7" y="16" width="2" height="1" fill="#ffffff"/><rect x="9" y="16" width="1" height="1" fill="#000000"/><rect x="6" y="17" width="1" height="1" fill="#000000"/><rect x="7" y="17" width="2" height="1" fill="#ffffff"/><rect x="9" y="17" width="1" height="1" fill="#000000"/><rect x="7" y="18" width="1" height="1" fill="#000000"/><rect x="8" y="18" width="2" height="1" fill="#ffffff"/><rect x="10" y="18" width="1" height="1" fill="#000000"/><rect x="7" y="19" width="1" height="1" fill="#000000"/><rect x="8" y="19" width="2" height="1" fill="#ffffff"/><rect x="10" y="19" width="1" height="1" fill="#000000"/><rect x="8" y="20" width="2" height="1" fill="#000000"/></svg></div>
</body></html>
